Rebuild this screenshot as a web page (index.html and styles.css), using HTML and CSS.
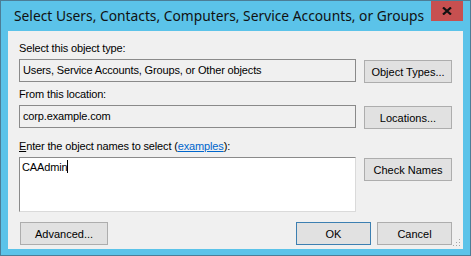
FILE: index.html
```html
<!DOCTYPE html>
<html lang="en">
<head>
  <meta charset="UTF-8" />
  <title>Select Users, Contacts, Computers, Service Accounts, or Groups</title>
  <link rel="stylesheet" href="styles.css">
</head>
<body>
  <div class="window">
    <div class="titlebar">
      <div class="title">Select Users, Contacts, Computers, Service Accounts, or Groups</div>
      <div class="close">
        <svg width="10" height="8" viewBox="0 0 10 8">
          <path d="M1 0.5 L9 7.5 M9 0.5 L1 7.5" stroke="#111" stroke-width="2.2" />
        </svg>
      </div>
    </div>

    <div class="client">
      <div class="label">Select this object type:</div>
      <div class="row">
        <div class="field readonly">Users, Service Accounts, Groups, or Other objects</div>
        <button class="btn">Object Types...</button>
      </div>

      <div class="label gap-small">From this location:</div>
      <div class="row">
        <div class="field readonly">corp.example.com</div>
        <button class="btn">Locations...</button>
      </div>

      <div class="label gap-large"><u>E</u>nter the object names to select (<a href="#" class="link">examples</a>):</div>
      <div class="row">
        <div class="field editor">CAAdmin<span class="caret"></span></div>
        <button class="btn">Check Names</button>
      </div>

      <div class="footer">
        <button class="btn">Advanced...</button>
        <div class="actions">
          <button class="btn default">OK</button>
          <button class="btn">Cancel</button>
        </div>
      </div>

      <!-- size grip -->
      <svg class="grip" width="8" height="8" viewBox="0 0 8 8">
        <rect x="6" y="0" width="1" height="1" fill="#a6a6a6" />
        <rect x="3" y="3" width="1" height="1" fill="#a6a6a6" />
        <rect x="6" y="3" width="1" height="1" fill="#a6a6a6" />
        <rect x="0" y="6" width="1" height="1" fill="#a6a6a6" />
        <rect x="3" y="6" width="1" height="1" fill="#a6a6a6" />
        <rect x="6" y="6" width="1" height="1" fill="#a6a6a6" />
      </svg>
    </div>
  </div>
</body>
</html>
```

FILE: styles.css
```css
/* Dialog colours */
:root {
  --frame: #5bc3e9;
  --frame-edge: #4c7d96;
  --client-bg: #f0f0f0;
  --close-bg: #c75050;
  --text: #000;
  --field-border: #8a8a8a;
  --btn-bg: #e1e1e1;
  --btn-border: #adadad;
  --default-border: #3c7fb1;
  --link: #0066cc;
}

* {
  margin: 0;
  padding: 0;
  box-sizing: border-box;
}

body {
  background: #fff;
  font-family: 'Liberation Sans', Arial, sans-serif;
  font-size: 11px;
  color: var(--text);
}

.window {
  width: 471px;
  height: 256px;
  background: var(--frame);
  border: 1px solid var(--frame-edge);
  display: flex;
  flex-direction: column;
}

.titlebar {
  height: 30px;
  display: flex;
  justify-content: space-between;
  align-items: flex-start;
}

.title {
  font-family: 'Noto Sans', 'Open Sans', sans-serif;
  font-size: 13.8px;
  line-height: 20px;
  padding: 5px 0 0 13px;
  color: #111;
  white-space: nowrap;
  overflow: hidden;
}

.close {
  flex-shrink: 0;
  width: 32px;
  height: 20px;
  margin-right: 7px;
  background: var(--close-bg);
  display: flex;
  justify-content: center;
  align-items: center;
}

.client {
  position: relative;
  height: 218px;
  margin: 0 7px;
  background: var(--client-bg);
  padding: 11px 0 0 11px;
}

.label {
  height: 13px;
  line-height: 13px;
  margin-bottom: 4px;
  white-space: nowrap;
  letter-spacing: -0.15px;
}

.label.gap-small {
  margin-top: 5px;
}

.label.gap-large {
  margin-top: 11px;
}

.link {
  color: var(--link);
}

.row {
  display: flex;
  align-items: flex-start;
  gap: 8px;
}

.field {
  width: 337px;
  height: 23px;
  line-height: 21px;
  padding: 0 3px;
  border: 1px solid var(--field-border);
  white-space: nowrap;
  letter-spacing: -0.15px;
}

.field.readonly {
  background: var(--client-bg);
}

.field.editor {
  height: 55px;
  line-height: 14px;
  padding: 2px 2px;
  background: #fff;
  border-color: #8a8a8a #dadada #dadada #8a8a8a;
}

.caret {
  display: inline-block;
  width: 1px;
  height: 13px;
  background: #000;
  vertical-align: -2px;
}

.btn {
  width: 88px;
  height: 23px;
  background: var(--btn-bg);
  border: 1px solid var(--btn-border);
  font-family: inherit;
  font-size: 11px;
  color: var(--text);
}

.row .btn {
  margin-top: 1px;
}

.btn.default {
  border-color: var(--default-border);
}

.footer {
  margin-top: 10px;
  padding-left: 1px;
  display: flex;
  justify-content: space-between;
  width: 433px;
}

.actions {
  display: flex;
  gap: 6px;
}

.actions .btn {
  width: 75px;
}

.grip {
  position: absolute;
  right: 2px;
  bottom: 2px;
}
```
